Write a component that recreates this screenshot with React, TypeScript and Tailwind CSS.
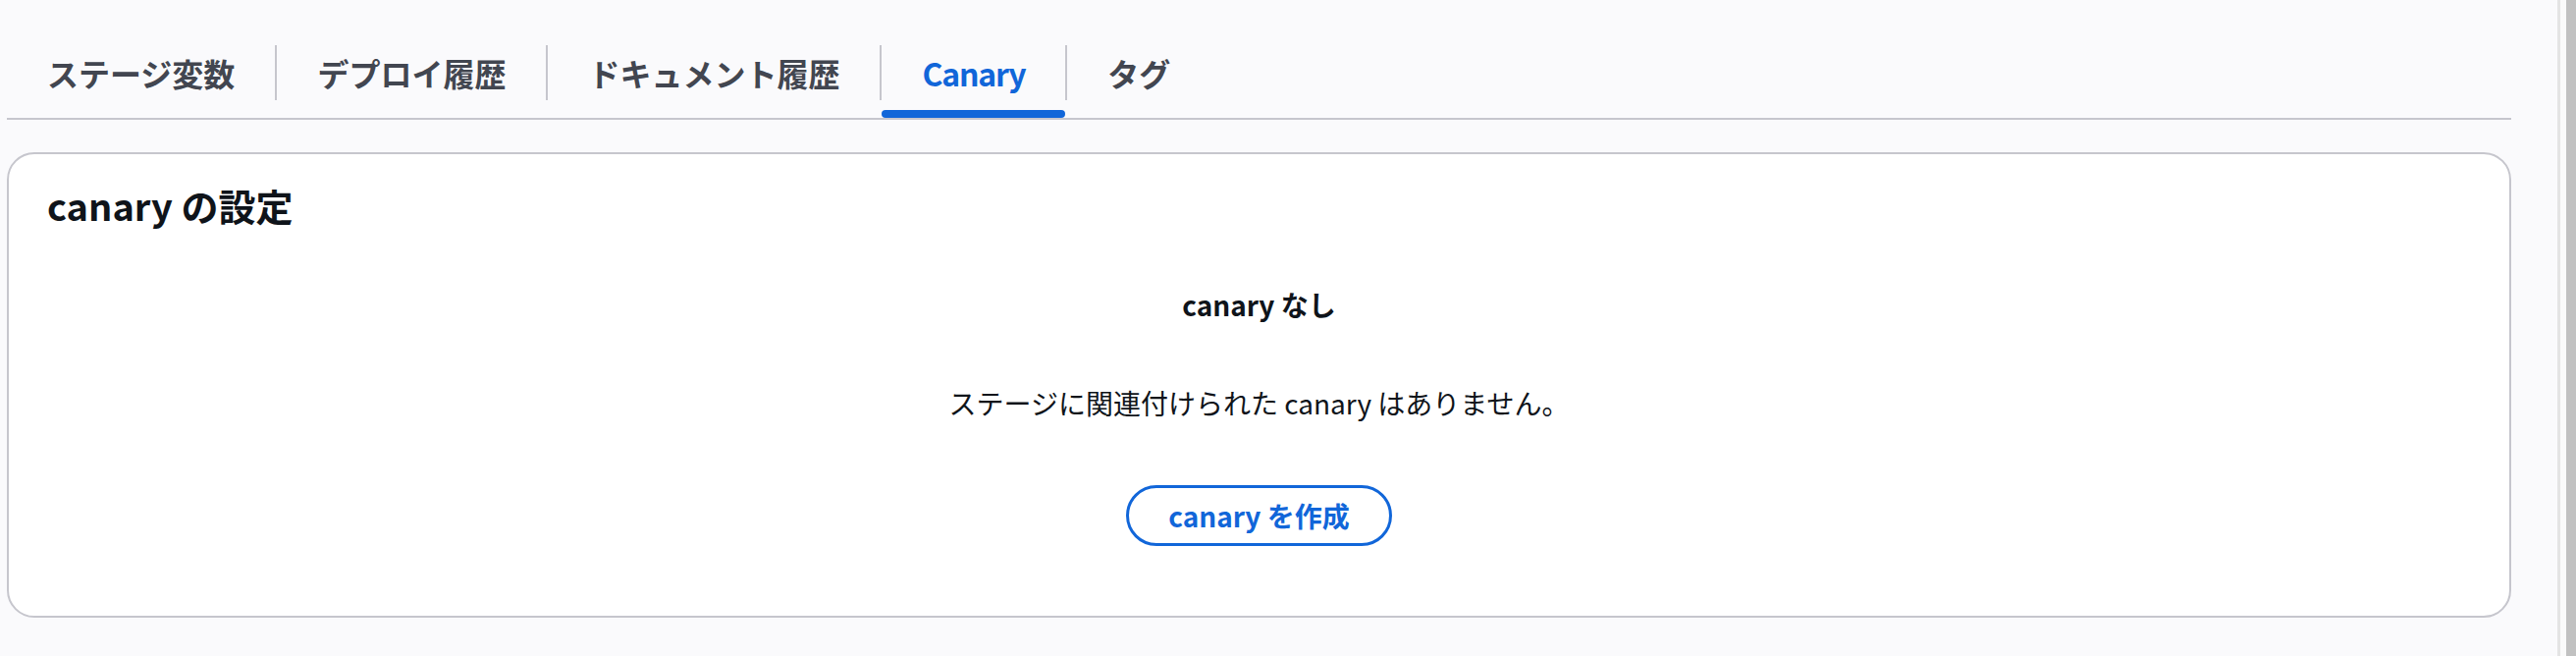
import React, { useState } from 'react';

const font = { fontFamily: '"Noto Sans CJK JP", "Noto Sans", sans-serif' };

const TABS = [
  { label: 'ステージ変数' },
  { label: 'デプロイ履歴' },
  { label: 'ドキュメント履歴' },
  { label: 'Canary', latin: true },
  { label: 'タグ' },
];

const StageTabs = ({ active, onSelect }: { active: number; onSelect: (i: number) => void }) => (
  <div className="flex items-start border-b-2 border-[#c6c6cd]">
    {TABS.map((tab, i) => (
      <React.Fragment key={tab.label}>
        {i > 0 && <div className="w-[2px] h-[56px] bg-[#c6c6cd]" />}
        <button onClick={() => onSelect(i)} className="flex flex-col">
          <span
            className={`h-[56px] px-[41px] flex items-center text-[32px] font-bold leading-none ${
              tab.latin ? 'tracking-[-1.2px]' : ''
            } ${active === i ? 'text-[#1166d9]' : 'text-[#424650]'}`}
          >
            {tab.label}
          </span>
          <span className={`mt-[10px] h-[8px] rounded-[4px] ${active === i ? 'bg-[#1166d9]' : 'bg-transparent'}`} />
        </button>
      </React.Fragment>
    ))}
  </div>
);

export default function App() {
  const [tab, setTab] = useState(3);

  return (
    <div className="flex w-full h-[668px] bg-[#fafafc] overflow-hidden" style={font}>
      {/* Stage detail area */}
      <div className="w-[2558px] shrink-0 pl-[7px] pt-[46px]">
        <StageTabs active={tab} onSelect={setTab} />

        {/* Canary settings panel */}
        <section className="mt-[33px] bg-white border-2 border-[#c6c6cd] rounded-[28px] pt-[27px] pb-[71px]">
          <h2 className="pl-[39px] text-[38px] leading-[50px] font-bold text-[#0f141a]">canary の設定</h2>
          <div className="flex flex-col items-center text-[#0f141a]">
            <p className="mt-[56px] text-[28px] leading-[40px] font-bold">canary なし</p>
            <p className="mt-[60px] text-[28px] leading-[40px]">ステージに関連付けられた canary はありません。</p>
            <button className="mt-[64px] h-[62px] px-[40px] rounded-full border-[3px] border-[#1166d9] text-[28px] font-bold text-[#1166d9] leading-none">
              canary を作成
            </button>
          </div>
        </section>
      </div>

      {/* Window scrollbar */}
      <div className="flex-1 bg-[#fafafc]" />
      <div className="w-[3px] bg-[#e4e4e4]" />
      <div className="w-[6px] bg-[#fafafa]" />
      <div className="w-[10px] bg-[#c1c1c1]" />
    </div>
  );
}
